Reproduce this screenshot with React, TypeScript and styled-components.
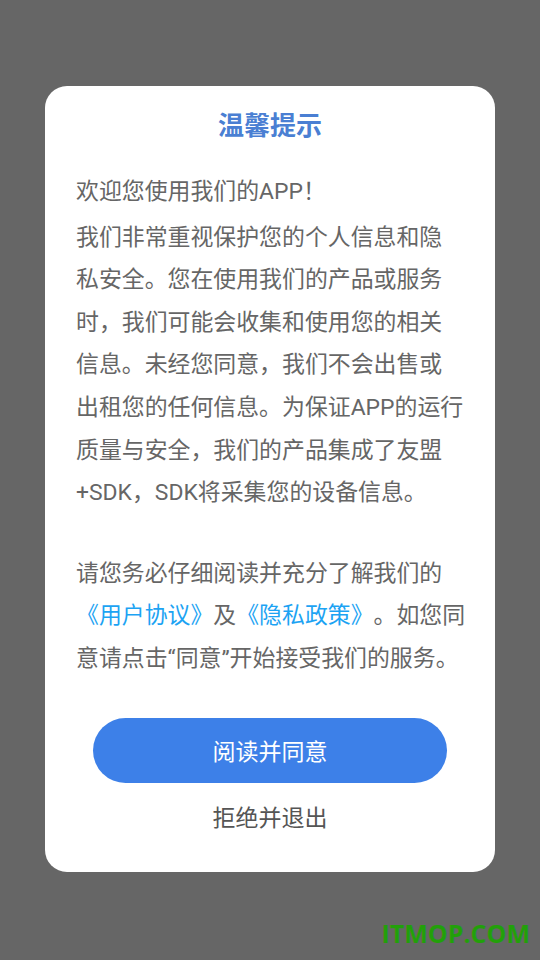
import React from "react";
import styled, { createGlobalStyle } from "styled-components";

const Global = createGlobalStyle`
  html, body { margin: 0; padding: 0; }
  body { background: #666666; font-family: Roboto, "Noto Sans CJK SC", sans-serif; }
`;

const Screen = styled.div`
  width: 540px;
  height: 960px;
  background: #666666;
  position: relative;
  padding-top: 86px;
  box-sizing: border-box;
`;

const Dialog = styled.div`
  margin: 0 45px;
  height: 786px;
  background: #ffffff;
  border-radius: 22px;
  box-sizing: border-box;
  padding: 18px 0 0;
  display: flex;
  flex-direction: column;
`;

const Title = styled.div`
  text-align: center;
  color: #4a7fd3;
  font-size: 26px;
  font-weight: 700;
  line-height: 40px;
  font-family: "Noto Sans CJK SC", sans-serif;
`;

const Body = styled.div`
  margin-top: 27px;
  padding: 0 10px 0 31px;
  color: #666666;
  font-size: 22.9px;
  line-height: 42.6px;
  text-spacing-trim: space-all;
`;

const Line = styled.div<{ $gapBefore?: number }>`
  white-space: nowrap;
  margin-top: ${(p) => p.$gapBefore ?? 0}px;
`;

const Link = styled.span`
  color: #1ca3f3;
`;

const Actions = styled.div`
  margin-top: 37px;
  display: flex;
  flex-direction: column;
  align-items: center;
`;

const AgreeButton = styled.button`
  width: 354px;
  height: 65px;
  border: none;
  border-radius: 33px;
  background: #3d80e8;
  color: #ffffff;
  font-size: 23px;
  font-family: Roboto, "Noto Sans CJK SC", sans-serif;
  cursor: pointer;
`;

const RefuseButton = styled.button`
  margin-top: 15px;
  border: none;
  background: transparent;
  color: #555555;
  font-size: 23px;
  line-height: 40px;
  font-family: Roboto, "Noto Sans CJK SC", sans-serif;
  cursor: pointer;
`;

const Watermark = styled.div`
  position: absolute;
  right: 10px;
  bottom: 10px;
  color: #22a00a;
  font-weight: 700;
  font-size: 25px;
  font-family: "Open Sans", sans-serif;
`;

export default function App() {
  return (
    <>
      <Global />
      <Screen>
        <Dialog>
          <Title>温馨提示</Title>
          <Body>
            <Line>欢迎您使用我们的APP！</Line>
            <Line $gapBefore={3}>我们非常重视保护您的个人信息和隐</Line>
            <Line>私安全。您在使用我们的产品或服务</Line>
            <Line>时，我们可能会收集和使用您的相关</Line>
            <Line>信息。未经您同意，我们不会出售或</Line>
            <Line>出租您的任何信息。为保证APP的运行</Line>
            <Line>质量与安全，我们的产品集成了友盟</Line>
            <Line>+SDK，SDK将采集您的设备信息。</Line>
            <Line $gapBefore={38}>请您务必仔细阅读并充分了解我们的</Line>
            <Line>
              <Link>《用户协议》</Link>及<Link>《隐私政策》</Link>。如您同
            </Line>
            <Line>意请点击“同意”开始接受我们的服务。</Line>
          </Body>
          <Actions>
            <AgreeButton>阅读并同意</AgreeButton>
            <RefuseButton>拒绝并退出</RefuseButton>
          </Actions>
        </Dialog>
        <Watermark>ITMOP.COM</Watermark>
      </Screen>
    </>
  );
}
